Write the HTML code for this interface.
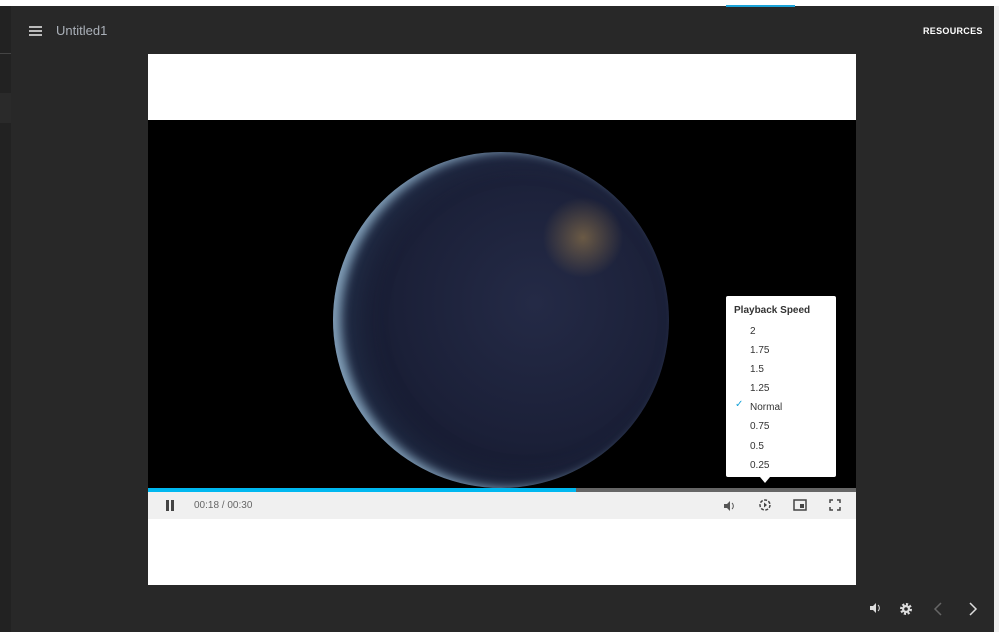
<!DOCTYPE html>
<html><head><style>
body{margin:0;width:999px;height:637px;background:#fff;position:relative;overflow:hidden;font-family:"Liberation Sans",sans-serif}
.main{position:absolute;left:0;top:6px;width:994px;height:626px;background:#282828}
.side{position:absolute;left:0;top:6px;width:11px;height:626px;background:#222}
.abs{position:absolute}
.menu div{height:2px;background:#bbb;margin-bottom:2px;width:13px}
</style></head><body>
<div class="abs" style="left:994px;top:6px;width:5px;height:626px;background:#f0f0f0"></div>
<div class="main"></div>
<div class="side"></div>
<div class="abs" style="left:0;top:53px;width:11px;height:1px;background:#444"></div>
<div class="abs" style="left:0;top:93px;width:11px;height:30px;background:#2a2a2a"></div>
<div class="abs" style="left:726px;top:5px;width:69px;height:2px;background:#1aa3d8"></div>
<div class="abs menu" style="left:29px;top:26px"><div></div><div></div><div></div></div>
<div class="abs" style="left:56px;top:23px;color:#aab0b8;font-size:13px">Untitled1</div>
<div class="abs" style="left:923px;top:26px;color:#fff;font-size:9px;font-weight:bold;letter-spacing:.3px">RESOURCES</div>
<div class="abs" style="left:148px;top:54px;width:708px;height:531px;background:#fff"></div>
<div class="abs" style="left:148px;top:120px;width:708px;height:368px;background:#000;overflow:hidden">
<div class="abs" style="left:185px;top:32px;width:336px;height:336px;border-radius:50%;background:radial-gradient(circle at 60% 45%,#242a46 0%,#1b2038 50%,#12162a 85%,#0e1222 100%);box-shadow:inset 8px 0 10px rgba(160,195,220,.75),inset 22px 0 30px rgba(60,90,120,.35)"></div>
<div class="abs" style="left:390px;top:75px;width:90px;height:85px;border-radius:50%;background:radial-gradient(circle,rgba(220,170,80,.4),rgba(0,0,0,0) 65%)"></div>
</div>
<div class="abs" style="left:148px;top:488px;width:708px;height:4px;background:#666"></div>
<div class="abs" style="left:148px;top:488px;width:428px;height:4px;background:#00b8f0"></div>
<div class="abs" style="left:148px;top:492px;width:708px;height:27px;background:#f0f0f0"></div>
<div class="abs" style="left:166px;top:500px;width:3px;height:11px;background:#444"></div>
<div class="abs" style="left:171px;top:500px;width:3px;height:11px;background:#444"></div>
<div class="abs" style="left:194px;top:500px;font-size:10px;color:#666">00:18 / 00:30</div>
<svg class="abs" style="left:722px;top:499px" width="14" height="14" viewBox="0 0 14 14"><path d="M2 5h3l3-3v10l-3-3H2z" fill="#555"/><path d="M10 4a4 4 0 0 1 0 6" stroke="#555" fill="none"/></svg>
<svg class="abs" style="left:758px;top:498px" width="14" height="14" viewBox="0 0 14 14"><circle cx="7" cy="7" r="5" stroke="#444" stroke-width="1.5" fill="none" stroke-dasharray="3 1.5"/><path d="M6 4.5v5l3-2.5z" fill="#444"/></svg>
<svg class="abs" style="left:793px;top:499px" width="14" height="12" viewBox="0 0 14 12"><rect x="1" y="1" width="12" height="10" stroke="#444" stroke-width="1.5" fill="none"/><rect x="7" y="5" width="4" height="4" fill="#444"/></svg>
<svg class="abs" style="left:829px;top:499px" width="12" height="12" viewBox="0 0 12 12"><path d="M1 4V1h3M8 1h3v3M11 8v3H8M4 11H1V8" stroke="#444" stroke-width="1.5" fill="none"/></svg>
<div class="abs" style="left:726px;top:296px;width:110px;height:181px;background:#fff;border-radius:2px;font-size:10px;color:#333">
<div style="position:absolute;left:8px;top:9px;font-weight:bold">Playback Speed</div>
<div style="position:absolute;left:24px;top:26px;line-height:19.1px">2<br>1.75<br>1.5<br>1.25<br>Normal<br>0.75<br>0.5<br>0.25</div>
<div style="position:absolute;left:9px;top:103px;color:#1aa3d8">✓</div>
</div>
<div class="abs" style="left:760px;top:477px;width:0;height:0;border-left:5px solid transparent;border-right:5px solid transparent;border-top:6px solid #fff"></div>
<svg class="abs" style="left:869px;top:602px" width="14" height="12" viewBox="0 0 14 12"><path d="M1 4h3l3-3v10l-3-3H1z" fill="#ddd"/><path d="M9 3a4 4 0 0 1 0 6" stroke="#ddd" fill="none"/></svg>
<svg class="abs" style="left:899px;top:602px" width="14" height="14" viewBox="0 0 14 14"><circle cx="7" cy="7" r="4.5" stroke="#ddd" stroke-width="3" fill="none" stroke-dasharray="2 1.5"/><circle cx="7" cy="7" r="4" fill="#ddd"/><circle cx="7" cy="7" r="1.8" fill="#282828"/></svg>
<svg class="abs" style="left:933px;top:602px" width="10" height="14" viewBox="0 0 10 14"><path d="M8 1L2 7l6 6" stroke="#666" stroke-width="1.5" fill="none"/></svg>
<svg class="abs" style="left:968px;top:602px" width="10" height="14" viewBox="0 0 10 14"><path d="M2 1l6 6-6 6" stroke="#ddd" stroke-width="1.5" fill="none"/></svg>
</body></html>
